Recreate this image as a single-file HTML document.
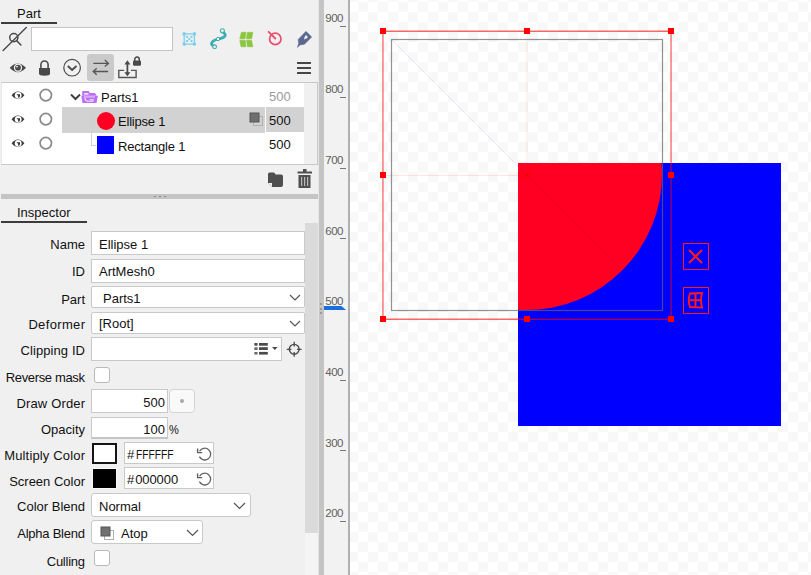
<!DOCTYPE html>
<html><head><meta charset="utf-8">
<style>
*{margin:0;padding:0;box-sizing:border-box}
html,body{width:811px;height:575px;overflow:hidden;background:#f0f0f0;font-family:"Liberation Sans",sans-serif;color:#111}
.a{position:absolute}
.t{position:absolute;font-size:13px;line-height:15px;white-space:nowrap}
.tr{letter-spacing:-0.2px}
.lbl{position:absolute;right:726px;font-size:13px;line-height:15px;white-space:nowrap;text-align:right}
.fld{position:absolute;background:#fff;border:1px solid #c9c9c9}
svg{position:absolute;overflow:visible}
#canvas{position:absolute;left:350px;top:0;width:461px;height:575px;overflow:hidden;
 background-color:#fff;
 background-image:linear-gradient(45deg,#f8f8f8 25%,transparent 25%,transparent 75%,#f8f8f8 75%),linear-gradient(45deg,#f8f8f8 25%,transparent 25%,transparent 75%,#f8f8f8 75%);
 background-size:20px 20px;background-position:-2px 2px,8px 12px}
.rl{position:absolute;left:325.3px;font-size:11.5px;line-height:11px;color:#606060;letter-spacing:-0.5px}
.tk{position:absolute;left:340px;width:6px;height:1px;background:#777}
.hd{position:absolute;width:6px;height:6px;background:#ff0000}
</style></head><body>
<!-- LEFT PANEL -->
<div class="t" style="left:17px;top:6px">Part</div>
<div class="a" style="left:1px;top:22px;width:56px;height:2px;background:#3c3c3c"></div>

<!-- search off icon -->
<svg style="left:0;top:24px" width="30" height="30" viewBox="0 0 30 30">
 <circle cx="13.8" cy="13.6" r="4.1" fill="none" stroke="#4a4a4a" stroke-width="1.5"/>
 <line x1="16.5" y1="16.5" x2="20.9" y2="21" stroke="#4a4a4a" stroke-width="1.6" stroke-linecap="round"/>
 <line x1="3.1" y1="26.6" x2="26.3" y2="3.4" stroke="#4a4a4a" stroke-width="1.4" stroke-linecap="round"/>
</svg>
<div class="fld" style="left:31px;top:27px;width:142px;height:24px;border-color:#c4c4c4"></div>

<!-- row1 colored icons -->
<svg style="left:182px;top:32px" width="15" height="15" viewBox="0 0 15 15">
 <rect x="2.2" y="1.9" width="10.2" height="10.2" fill="none" stroke="#7ccfeb" stroke-width="1.3"/>
 <circle cx="2.2" cy="1.9" r="1.8" fill="#7ccfeb"/><circle cx="12.4" cy="1.9" r="1.8" fill="#7ccfeb"/>
 <circle cx="2.2" cy="12.1" r="1.8" fill="#7ccfeb"/><circle cx="12.4" cy="12.1" r="1.8" fill="#7ccfeb"/>
 <rect x="4.1" y="3.8" width="2" height="2" fill="#7ccfeb"/><rect x="8.5" y="3.8" width="2" height="2" fill="#7ccfeb"/>
 <rect x="4.1" y="8" width="2" height="2" fill="#7ccfeb"/><rect x="8.5" y="8" width="2" height="2" fill="#7ccfeb"/><rect x="6.3" y="6" width="2" height="2" fill="#7ccfeb"/>
</svg>
<svg style="left:209px;top:28px" width="19" height="22" viewBox="0 0 19 22">
 <path d="M14 4.5 C18 6.5 17 9.5 9 11 C2.5 12.5 0.5 16.5 5 18.5" fill="none" stroke="#3aadb1" stroke-width="2.8"/>
 <circle cx="13.4" cy="2.7" r="2" fill="#f0f0f0" stroke="#3aadb1" stroke-width="1.1"/>
 <circle cx="9" cy="11" r="1.7" fill="#f0f0f0" stroke="#3aadb1" stroke-width="1"/>
 <circle cx="5.6" cy="18.8" r="1.9" fill="#f0f0f0" stroke="#3aadb1" stroke-width="1.1"/>
</svg>
<svg style="left:239px;top:32px" width="15" height="15" viewBox="0 0 15 15">
 <path d="M2.4 0.3 L7.1 0.3 L6 6.7 L0.8 6.7Z M8.5 0.3 L13.8 0.3 L12.7 6.7 L7.3 6.7Z M0.8 8.2 L6.2 8.2 L7 14.7 L2 14.7Z M7.5 8.2 L12.5 8.2 L13.8 14.7 L8.5 14.7Z" fill="#8cc63e" stroke="#8cc63e" stroke-width="0.6" stroke-linejoin="round"/>
</svg>
<svg style="left:267px;top:30px" width="16" height="17" viewBox="0 0 16 17">
 <circle cx="8.3" cy="8.9" r="5.7" fill="none" stroke="#e84f6e" stroke-width="1.7"/>
 <line x1="1.6" y1="1.8" x2="8.3" y2="8.5" stroke="#e84f6e" stroke-width="1.8" stroke-linecap="round"/>
</svg>
<svg style="left:296px;top:31px" width="17" height="17" viewBox="0 0 17 17">
 <path d="M10 0.3 L15.7 6 L8.5 13.2 L4 14 L1.4 16.4 L2.6 12.6 L2.2 8.4Z" fill="#5a6991" stroke="#5a6991" stroke-width="0.5" stroke-linejoin="round"/>
 <path d="M10 4 Q12 5 11.5 7 L8 8.5 Q8.3 5 10 4Z" fill="#f0f0f0"/>
</svg>

<!-- row2 icons -->
<svg style="left:9px;top:61px" width="18" height="14" viewBox="0 0 18 14">
 <path d="M0.7 6.8 Q8.8 -2 17 6.8 Q8.8 15.6 0.7 6.8Z" fill="#4a4a4a"/>
 <circle cx="9" cy="6.7" r="3.5" fill="none" stroke="#f2f2f2" stroke-width="1.3"/>
 <circle cx="8" cy="5.6" r="0.9" fill="#f2f2f2"/>
</svg>
<svg style="left:38px;top:60px" width="13" height="17" viewBox="0 0 13 17">
 <path d="M2.9 8.5 V4.6 a3.6 3.6 0 0 1 7.2 0 V8.5" fill="none" stroke="#4a4a4a" stroke-width="1.6"/>
 <path d="M1 8 H12 V13.5 Q12 15.7 6.5 15.7 Q1 15.7 1 13.5Z" fill="#4a4a4a"/>
</svg>
<svg style="left:62px;top:58px" width="20" height="20" viewBox="0 0 20 20">
 <circle cx="10.1" cy="9.7" r="8.3" fill="none" stroke="#4a4a4a" stroke-width="1.2"/>
 <path d="M5.8 8 L10.1 12 L14.5 8" fill="none" stroke="#4a4a4a" stroke-width="1.9"/>
</svg>
<div class="a" style="left:87px;top:54px;width:27px;height:26.5px;background:#cacaca;border-radius:3px"></div>
<svg style="left:87px;top:54px" width="27" height="27" viewBox="0 0 27 27">
 <path d="M6.3 9.4 H21.3 M17.8 6.1 L21.5 9.4 L17.8 12.6" fill="none" stroke="#555" stroke-width="1.3"/>
 <path d="M21.1 17.5 H6.4 M9.7 14.3 L6.2 17.5 L9.7 20.8" fill="none" stroke="#555" stroke-width="1.3"/>
</svg>
<svg style="left:118px;top:56px" width="24" height="22" viewBox="0 0 24 22">
 <path d="M6.2 14.4 H0.8 V21.5 H18.1 V14.4 H12.9" fill="none" stroke="#555" stroke-width="1.4"/>
 <path d="M9.4 6.5 V18" fill="none" stroke="#4a4a4a" stroke-width="1.8"/>
 <path d="M6.4 8.5 L9.4 4.3 L12.4 8.5Z M6.4 16.2 L9.4 20.3 L12.4 16.2Z" fill="#4a4a4a"/>
 <path d="M16.7 5 V3.4 a2.3 2.3 0 0 1 4.6 0 V5" fill="none" stroke="#4a4a4a" stroke-width="1.5"/>
 <rect x="15" y="4.6" width="8" height="5.1" rx="1.3" fill="#4a4a4a"/>
</svg>
<svg style="left:297px;top:62px" width="15" height="13" viewBox="0 0 15 13">
 <rect x="0" y="0" width="14" height="2" fill="#474747"/><rect x="0" y="5" width="14" height="2" fill="#474747"/><rect x="0" y="10" width="14" height="2" fill="#474747"/>
</svg>

<!-- TREE -->
<div class="a" style="left:1px;top:82px;width:317px;height:83px;background:#fff;border:1px solid #c8c8c8;border-left-color:#e8e8e8"></div>
<div class="a" style="left:304px;top:83px;width:13px;height:81px;background:#f0f0f0"></div>
<!-- selected row -->
<div class="a" style="left:62px;top:107px;width:203px;height:26px;background:#d2d2d2"></div>
<div class="a" style="left:266px;top:107px;width:38px;height:25px;background:#d2d2d2"></div>
<!-- tree lines -->
<div class="a" style="left:91px;top:108px;width:1px;height:38px;background:#d0d0d0"></div>
<div class="a" style="left:91px;top:145px;width:5px;height:1px;background:#d0d0d0"></div>

<!-- eyes & circles -->
<svg style="left:11px;top:90px" width="14" height="11" viewBox="0 0 14 11">
 <path d="M0.6 5.3 Q7 -2.2 13.4 5.3 Q7 12.8 0.6 5.3Z" fill="#3a3a3a"/>
 <circle cx="7.2" cy="5.3" r="3.4" fill="#fff"/>
 <path d="M5.6 4.3 H9 V6 Q9 8 7.3 7.8 Q7.6 6 5.6 4.3Z" fill="#3a3a3a"/>
</svg>
<svg style="left:11px;top:114px" width="14" height="11" viewBox="0 0 14 11">
 <path d="M0.6 5.3 Q7 -2.2 13.4 5.3 Q7 12.8 0.6 5.3Z" fill="#3a3a3a"/>
 <circle cx="7.2" cy="5.3" r="3.4" fill="#fff"/>
 <path d="M5.6 4.3 H9 V6 Q9 8 7.3 7.8 Q7.6 6 5.6 4.3Z" fill="#3a3a3a"/>
</svg>
<svg style="left:11px;top:138px" width="14" height="11" viewBox="0 0 14 11">
 <path d="M0.6 5.3 Q7 -2.2 13.4 5.3 Q7 12.8 0.6 5.3Z" fill="#3a3a3a"/>
 <circle cx="7.2" cy="5.3" r="3.4" fill="#fff"/>
 <path d="M5.6 4.3 H9 V6 Q9 8 7.3 7.8 Q7.6 6 5.6 4.3Z" fill="#3a3a3a"/>
</svg>
<svg style="left:38px;top:88px" width="15" height="15" viewBox="0 0 15 15"><circle cx="7.8" cy="7.1" r="5.7" fill="none" stroke="#8a8a8a" stroke-width="1.7"/></svg>
<svg style="left:38px;top:112px" width="15" height="15" viewBox="0 0 15 15"><circle cx="7.8" cy="7.1" r="5.7" fill="none" stroke="#8a8a8a" stroke-width="1.7"/></svg>
<svg style="left:38px;top:136px" width="15" height="15" viewBox="0 0 15 15"><circle cx="7.8" cy="7.1" r="5.7" fill="none" stroke="#8a8a8a" stroke-width="1.7"/></svg>

<!-- row Parts1 -->
<svg style="left:70px;top:93px" width="12" height="8" viewBox="0 0 12 8"><path d="M1 1.5 L5.5 6 L10 1.5" fill="none" stroke="#404040" stroke-width="2"/></svg>
<svg style="left:81px;top:90px" width="18" height="14" viewBox="0 0 18 14">
 <path d="M1.2 1.6 Q1.2 0.9 1.9 0.9 H7.8 L8.8 3.1 H13.6 Q14.1 3.1 14.4 3.6 L15.6 5.8 H1.2Z" fill="#bb6ff6"/>
 <rect x="3.1" y="3.1" width="4.4" height="1.6" fill="#f4e8ff"/>
 <path d="M0.3 5.8 H16.9 L15.5 13 H1.5Z" fill="#bb6ff6"/>
 <rect x="3" y="6.1" width="11" height="1.5" fill="#dcb6fb"/>
 <path d="M3.8 7.9 Q4.6 11.3 6.5 11.3 H11.4 Q12.6 11.3 12.1 9.7 H8.6" fill="none" stroke="#f4e8ff" stroke-width="1.1"/>
</svg>
<div class="t" style="left:101px;top:90px">Parts1</div>
<div class="t" style="left:269px;top:89px;color:#9a9a9a">500</div>

<!-- row Ellipse -->
<div class="a" style="left:96.5px;top:112px;width:18px;height:18px;border-radius:50%;background:#ff0022"></div>
<div class="t tr" style="left:118px;top:114px">Ellipse 1</div>
<svg style="left:249px;top:112px" width="15" height="15" viewBox="0 0 15 15">
 <rect x="4.5" y="4.5" width="9" height="9" fill="none" stroke="#b0b0b0" stroke-width="1"/>
 <rect x="1" y="1" width="9" height="9" fill="#707070" stroke="#555" stroke-width="1"/>
</svg>
<div class="t" style="left:269px;top:113px">500</div>

<!-- row Rectangle -->
<div class="a" style="left:97px;top:136px;width:17px;height:18px;background:#0000ff"></div>
<div class="t tr" style="left:118px;top:139px">Rectangle 1</div>
<div class="t" style="left:269px;top:137px">500</div>

<!-- tree bottom icons -->
<svg style="left:267px;top:172px" width="17" height="16" viewBox="0 0 17 16">
 <path d="M1 2 Q1 0.5 2.5 0.5 H6.5 Q8 0.5 8.5 2.5 H14 Q16 2.5 16 4.5 V13 Q16 15 14 15 H5 L1 11Z" fill="#4f4f4f"/>
 <path d="M1 11 H5 V15Z" fill="#f0f0f0"/>
</svg>
<svg style="left:297px;top:169px" width="16" height="20" viewBox="0 0 16 20">
 <rect x="6" y="0" width="3.5" height="3" fill="#4f4f4f"/>
 <rect x="0.5" y="2.5" width="14.5" height="2" fill="#4f4f4f"/>
 <rect x="1.5" y="6" width="12" height="13" fill="#4f4f4f"/>
 <rect x="4" y="8" width="1.2" height="9" fill="#b8b8b8"/><rect x="7" y="8" width="1.2" height="9" fill="#b8b8b8"/><rect x="10" y="8" width="1.2" height="9" fill="#b8b8b8"/>
</svg>

<!-- splitter -->
<div class="a" style="left:1px;top:194px;width:317px;height:5px;background:#c4c4c4"></div>
<div class="a" style="left:154px;top:196px;width:2px;height:1px;background:#8a8a8a"></div>
<div class="a" style="left:159px;top:196px;width:2px;height:1px;background:#8a8a8a"></div>
<div class="a" style="left:164px;top:196px;width:2px;height:1px;background:#8a8a8a"></div>

<!-- INSPECTOR -->
<div class="t" style="left:17px;top:205px">Inspector</div>
<div class="a" style="left:1px;top:221px;width:86px;height:2px;background:#3c3c3c"></div>
<div class="a" style="left:305px;top:223px;width:13px;height:310px;background:#dadada"></div>
<div class="a" style="left:305px;top:533px;width:13px;height:42px;background:#f4f4f4"></div>

<div class="lbl" style="top:237px">Name</div>
<div class="fld" style="left:91px;top:231px;width:214px;height:24px"></div>
<div class="t" style="left:99px;top:237px">Ellipse 1</div>

<div class="lbl" style="top:264px">ID</div>
<div class="fld" style="left:91px;top:259px;width:214px;height:24px"></div>
<div class="t" style="left:99px;top:264px">ArtMesh0</div>

<div class="lbl" style="top:292px">Part</div>
<div class="fld" style="left:91px;top:286px;width:214px;height:22px;border-radius:2px"></div>
<div class="t" style="left:103px;top:291px">Parts1</div>
<svg style="left:289px;top:294px" width="12" height="8" viewBox="0 0 12 8"><path d="M1 1 L6 6 L11 1" fill="none" stroke="#555" stroke-width="1.2"/></svg>

<div class="lbl" style="top:317px;letter-spacing:0.35px;right:725.65px">Deformer</div>
<div class="fld" style="left:91px;top:312px;width:214px;height:22px;border-radius:2px"></div>
<div class="t" style="left:99px;top:316px">[Root]</div>
<svg style="left:289px;top:320px" width="12" height="8" viewBox="0 0 12 8"><path d="M1 1 L6 6 L11 1" fill="none" stroke="#555" stroke-width="1.2"/></svg>

<div class="lbl" style="top:343px;letter-spacing:0.1px;right:725.9px">Clipping ID</div>
<div class="fld" style="left:91px;top:337px;width:191px;height:24px"></div>
<svg style="left:253px;top:342px" width="28" height="14" viewBox="0 0 28 14">
 <rect x="1.3" y="1" width="3.3" height="2.7" rx="0.6" fill="#505050"/><rect x="6" y="1" width="8.8" height="2.7" fill="#4a4a4a"/>
 <rect x="1.3" y="5.2" width="3.3" height="2.8" rx="0.6" fill="#6a6a6a"/><rect x="6" y="5.2" width="8.8" height="2.8" fill="#4a4a4a"/>
 <rect x="1.3" y="9.9" width="3.3" height="2.7" rx="0.6" fill="#6a6a6a"/><rect x="6" y="9.9" width="8.8" height="2.7" fill="#4a4a4a"/>
 <path d="M19 5.1 L24.6 5.1 L21.8 8Z" fill="#4a4a4a"/>
</svg>
<svg style="left:286px;top:341px" width="17" height="17" viewBox="0 0 17 17">
 <circle cx="8.2" cy="8.3" r="4.9" fill="none" stroke="#4a4a4a" stroke-width="1.4"/>
 <path d="M8.2 0.8 V5.5 M8.2 11.1 V15.8 M0.8 8.3 H5.4 M11 8.3 H15.6" stroke="#4a4a4a" stroke-width="1.3"/>
</svg>

<div class="lbl" style="top:370px;letter-spacing:-0.35px;right:726.35px">Reverse mask</div>
<div class="a" style="left:94px;top:367px;width:16px;height:16px;border:1px solid #b9b9b9;border-radius:3px;background:#fff"></div>

<div class="lbl" style="top:396px;letter-spacing:0.15px;right:725.85px">Draw Order</div>
<div class="fld" style="left:91px;top:389px;width:77px;height:24px"></div>
<div class="t" style="left:91px;width:74px;text-align:right;top:395px">500</div>
<div class="a" style="left:168.5px;top:389px;width:26px;height:24px;border:1px solid #d4d4d4;border-radius:4px;background:#f9f9f9"></div>
<div class="a" style="left:179.5px;top:399px;width:4px;height:4px;border-radius:50%;background:#a8a8a8"></div>

<div class="lbl" style="top:422px">Opacity</div>
<div class="fld" style="left:91px;top:417px;width:77px;height:22px;border-bottom:2px solid #c4c4c4"></div>
<div class="t" style="left:91px;width:74px;text-align:right;top:422px">100</div>
<div class="t" style="left:168.7px;top:422px;display:inline-block;transform:scaleX(0.85);transform-origin:0 0">%</div>

<div class="lbl" style="top:448px;letter-spacing:0.16px;right:725.84px">Multiply Color</div>
<div class="a" style="left:92px;top:443px;width:25px;height:21px;border:2px solid #141414;background:#fff"></div>
<div class="fld" style="left:124px;top:442px;width:90px;height:22px"></div>
<div class="t" style="left:127px;top:447px">#<span style="display:inline-block;margin-left:1.5px;transform:scaleX(0.79);transform-origin:0 0">FFFFFF</span></div>
<svg style="left:196px;top:446px" width="17" height="16" viewBox="0 0 17 16">
 <path d="M3.6 5.2 A5.9 5.9 0 1 1 3.4 10.6" fill="none" stroke="#606060" stroke-width="1.3"/>
 <path d="M1.6 2.4 V6.6 H6.2" fill="none" stroke="#606060" stroke-width="1.4"/>
</svg>

<div class="lbl" style="top:474px">Screen Color</div>
<div class="a" style="left:92px;top:468px;width:25px;height:21px;border:1px solid #f8f8f8;background:#000"></div>
<div class="fld" style="left:124px;top:467px;width:90px;height:22px"></div>
<div class="t" style="left:127px;top:472px">#<span style="margin-left:1px;letter-spacing:-0.1px">000000</span></div>
<svg style="left:196px;top:471px" width="17" height="16" viewBox="0 0 17 16">
 <path d="M3.6 5.2 A5.9 5.9 0 1 1 3.4 10.6" fill="none" stroke="#606060" stroke-width="1.3"/>
 <path d="M1.6 2.4 V6.6 H6.2" fill="none" stroke="#606060" stroke-width="1.4"/>
</svg>

<div class="lbl" style="top:499px">Color Blend</div>
<div class="fld" style="left:91px;top:493px;width:160px;height:24px;border-radius:3px"></div>
<div class="t" style="left:99px;top:499px">Normal</div>
<svg style="left:233px;top:502px" width="13" height="8" viewBox="0 0 13 8"><path d="M1 1 L6.5 6.5 L12 1" fill="none" stroke="#555" stroke-width="1.2"/></svg>

<div class="lbl" style="top:526px;letter-spacing:-0.23px;right:726.23px">Alpha Blend</div>
<div class="fld" style="left:91px;top:520px;width:112px;height:24px;border-radius:3px"></div>
<svg style="left:100px;top:526px" width="15" height="15" viewBox="0 0 15 15">
 <rect x="4.5" y="4.5" width="9" height="9" fill="none" stroke="#b0b0b0" stroke-width="1"/>
 <rect x="1" y="1" width="9" height="9" fill="#707070" stroke="#555" stroke-width="1"/>
</svg>
<div class="t" style="left:121px;top:526px">Atop</div>
<svg style="left:186px;top:529px" width="13" height="8" viewBox="0 0 13 8"><path d="M1 1 L6.5 6.5 L12 1" fill="none" stroke="#555" stroke-width="1.2"/></svg>

<div class="lbl" style="top:554px;letter-spacing:-0.25px;right:726.25px">Culling</div>
<div class="a" style="left:94px;top:550px;width:16px;height:16px;border:1px solid #b9b9b9;border-radius:3px;background:#fff"></div>

<!-- VERTICAL SPLIT BAR + RULER -->
<div class="a" style="left:318px;top:0;width:1px;height:575px;background:#e6e6e6"></div>
<div class="a" style="left:319px;top:0;width:5px;height:575px;background:#c4c4c4"></div>
<div class="a" style="left:320px;top:303px;width:2px;height:2px;background:#9a9a9a"></div>
<div class="a" style="left:320px;top:308px;width:2px;height:2px;background:#9a9a9a"></div>
<div class="a" style="left:320px;top:312px;width:2px;height:2px;background:#9a9a9a"></div>
<div class="a" style="left:324px;top:0;width:24px;height:575px;background:#f2f2f2"></div>
<div class="a" style="left:348px;top:0;width:2px;height:575px;background:#b0b0b0"></div>

<div class="rl" style="top:13px">900</div><div class="tk" style="top:26px"></div>
<div class="rl" style="top:84px">800</div><div class="tk" style="top:97px"></div>
<div class="rl" style="top:155px">700</div><div class="tk" style="top:168px"></div>
<div class="rl" style="top:226px">600</div><div class="tk" style="top:238px"></div>
<div class="rl" style="top:296px">500</div>
<div class="rl" style="top:367px">400</div><div class="tk" style="top:380px"></div>
<div class="rl" style="top:438px">300</div><div class="tk" style="top:450px"></div>
<div class="rl" style="top:508px">200</div><div class="tk" style="top:521px"></div>
<svg style="left:324px;top:306px" width="23" height="4" viewBox="0 0 23 4"><path d="M0 0 H17.5 L22 4 H0Z" fill="#1a6fe0"/></svg>

<!-- CANVAS -->
<div id="canvas">
 <svg style="left:0;top:0" width="461" height="575" viewBox="350 0 461 575">
  <!-- faint guides -->
  <line x1="527" y1="34" x2="527" y2="316" stroke="rgba(255,0,0,0.1)" stroke-width="1"/>
  <line x1="386" y1="175.5" x2="668" y2="175.5" stroke="rgba(255,0,0,0.1)" stroke-width="1"/>
  <rect x="518" y="163" width="263" height="263" fill="#0000ff"/>
  <clipPath id="cp"><rect x="518" y="163" width="263" height="263"/></clipPath>
  <circle cx="526.5" cy="174.5" r="135.5" fill="#ff0022" clip-path="url(#cp)"/>
  <rect x="524" y="172" width="6" height="6" fill="rgba(255,0,0,0.6)"/>
  <line x1="392" y1="40" x2="662" y2="310" stroke="rgba(0,0,160,0.08)" stroke-width="1"/>
  <!-- grey box -->
  <rect x="391.5" y="39.5" width="271" height="271" fill="none" stroke="rgba(100,100,100,0.7)" stroke-width="1.2"/>
  <!-- red bbox -->
  <path d="M382.3 30.6 H672 V31.9 H382.3Z M382.3 318.6 H672 V319.9 H382.3Z M382.3 31.9 V318.6 H383.6 V31.9Z M670.4 31.9 V318.6 H671.7 V31.9Z" fill="rgba(255,0,0,0.6)"/>
 </svg>
 <div class="hd" style="left:30px;top:28px"></div>
 <div class="hd" style="left:174px;top:28px"></div>
 <div class="hd" style="left:318px;top:28px"></div>
 <div class="hd" style="left:30px;top:172px"></div>
 <div class="hd" style="left:318px;top:172px"></div>
 <div class="hd" style="left:30px;top:316px"></div>
 <div class="hd" style="left:174px;top:316px"></div>
 <div class="hd" style="left:318px;top:316px"></div>
 <!-- right buttons -->
 <div class="a" style="left:332.6px;top:243px;width:26.4px;height:27px;border:1.5px solid #ff1a1a"></div>
 <svg style="left:337.8px;top:249px" width="15" height="15" viewBox="0 0 15 15"><path d="M1 1 L14 14 M14 1 L1 14" stroke="#ff1a1a" stroke-width="2.1"/></svg>
 <div class="a" style="left:332.6px;top:287px;width:26.4px;height:27px;border:1.5px solid #ff1a1a"></div>
 <svg style="left:336.6px;top:292.3px" width="17" height="17" viewBox="0 0 17 17">
  <path d="M3 1.5 Q0.5 8 3 15 L15 15.5 Q13 8 15 1 Z M8.5 1.5 V15.2 M2 8.3 H14" fill="none" stroke="#ff1a1a" stroke-width="1.9"/>
 </svg>
</div>
</body></html>
